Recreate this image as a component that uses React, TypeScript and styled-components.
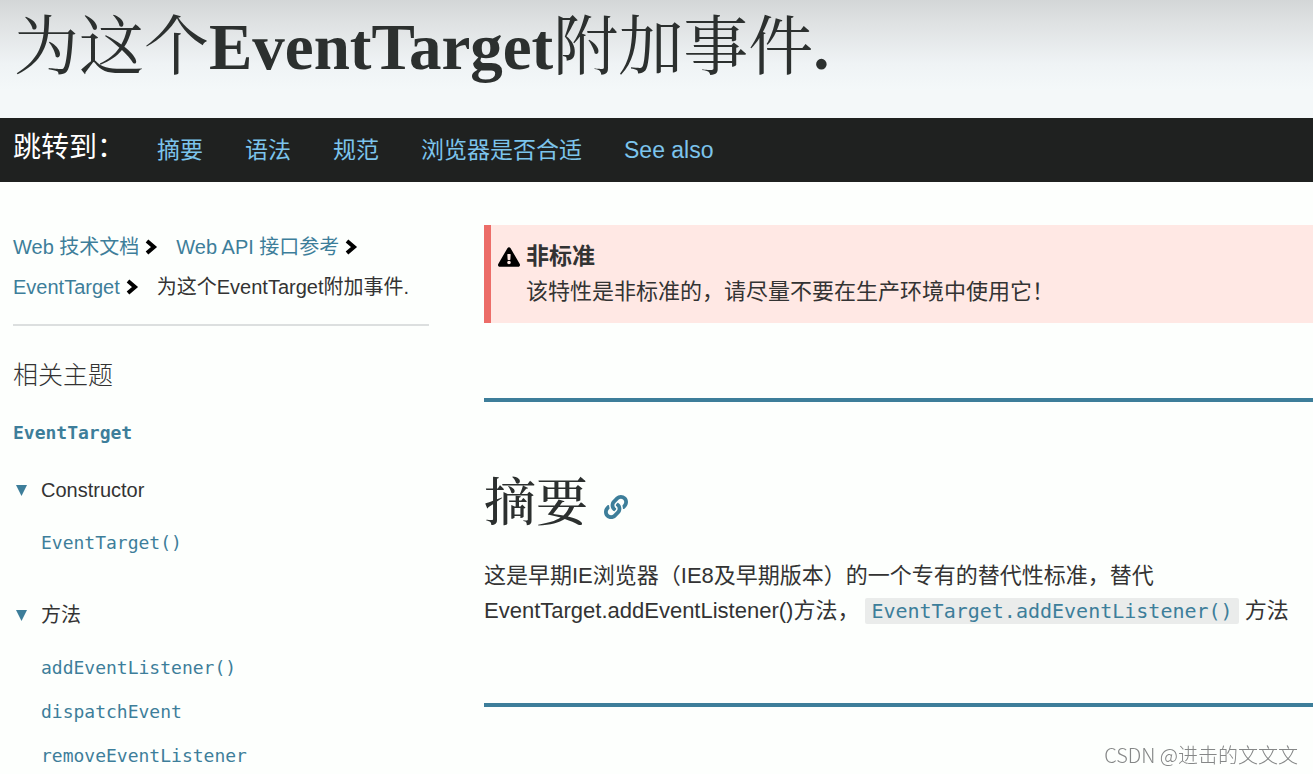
import React from "react";
import styled, { createGlobalStyle } from "styled-components";
import { FaExclamationTriangle, FaLink } from "react-icons/fa";

const sans = `"Liberation Sans", "Noto Sans CJK SC", sans-serif`;
const serif = `"Liberation Serif", "Noto Serif CJK SC", "Noto Sans CJK SC", serif`;
const mono = `"DejaVu Sans Mono", "Noto Sans CJK SC", monospace`;

const GlobalStyle = createGlobalStyle`
  *, *::before, *::after { box-sizing: border-box; }
  body {
    margin: 0;
    background: #fdfffd;
    color: #333;
    font: 20px/40px ${sans};
  }
  a { color: #3d7e9a; text-decoration: none; }
  a:hover { text-decoration: underline; }
  ul, ol { list-style: none; margin: 0; padding: 0; }
`;

const Header = styled.header`
  padding: 7px 14px 31px;
  background: linear-gradient(#d3d6d7 0, #dfe2e3 24px, #eff3f5 64px, #f4f8f9 90px);
`;

const Title = styled.h1`
  margin: 0;
  font: 400 65px/80px ${serif};
  color: #2c302f;
`;

const Latin = styled.span`
  font-weight: 700;
`;

const JumpBar = styled.nav`
  display: flex;
  align-items: center;
  gap: 32px;
  min-height: 64px;
  padding: 0 13px;
  background: #1f2120;
`;

const JumpLabel = styled.span`
  font-size: 28px;
  line-height: 60px;
  padding-bottom: 4px;
  color: #fff;
`;

const JumpList = styled.ul`
  display: flex;
  flex-wrap: wrap;
  gap: 0 42px;
  font-size: 23px;
  a { color: #7cc4ec; }
`;

const Columns = styled.div`
  display: grid;
  grid-template-columns: minmax(0, 416px) minmax(0, 1fr);
  gap: 55px;
  padding-left: 13px;
`;

const Sidebar = styled.aside`
  padding-top: 45px;
`;

const Crumbs = styled.ol`
  display: flex;
  flex-wrap: wrap;
  column-gap: 18px;
  padding-bottom: 17px;
  border-bottom: 2px solid #dcdfdf;
`;

const Crumb = styled.li`
  display: flex;
  align-items: center;
  gap: 6px;
`;

const TopicTitle = styled.h2`
  margin: 29px 0 0;
  font-size: 25px;
  font-weight: 300;
  line-height: 40px;
`;

const TopicLink = styled.a`
  display: block;
  margin-top: 20px;
  font: 700 18px/36px ${mono};
`;

const Group = styled.details`
  margin-top: 18px;
  & + & { margin-top: 29px; }
`;

const GroupTitle = styled.summary`
  display: flex;
  align-items: center;
  gap: 14px;
  padding-left: 3px;
  line-height: 42px;
  cursor: pointer;
`;

const GroupList = styled.ul`
  padding: 10px 0 0 28px;
  font: 18px/44px ${mono};
`;

const Content = styled.main`
  padding-top: 43px;
`;

const Alert = styled.div`
  display: grid;
  grid-template-columns: 22px 1fr;
  column-gap: 6px;
  padding: 14px 7px;
  border-left: 7px solid #ec6d68;
  background: #ffe8e4;
  line-height: 35px;
  svg { align-self: center; color: #000; }
`;

const AlertTitle = styled.strong`
  font-size: 23px;
`;

const AlertText = styled.span`
  grid-column: 2;
  font-size: 22px;
`;

const Section = styled.section`
  margin-top: 75px;
  padding-top: 64px;
  border-top: 4px solid #3d7e9a;
`;

const SectionTitle = styled.h2`
  display: flex;
  align-items: center;
  gap: 16px;
  margin: 0;
  font: 500 52px/76px ${serif};
  color: #2c302f;
  a { display: flex; padding-top: 6px; }
`;

const Paragraph = styled.p`
  margin: 16px 0 0;
  font-size: 22px;
  line-height: 35px;
`;

const Code = styled.code`
  margin-left: 6px;
  padding: 1px 6px;
  border-radius: 2px;
  background: #eaeceb;
  font: 20px/24px ${mono};
`;

const Watermark = styled.div`
  position: fixed;
  right: 15px;
  bottom: 4px;
  font: 300 20px/30px "Noto Sans CJK SC", sans-serif;
  color: #858787;
`;

const Chevron = () => (
  <svg width="13" height="16" viewBox="0 0 13 16" aria-hidden="true">
    <path d="M2 2 9 8 2 14" fill="none" stroke="#000" strokeWidth="4" />
  </svg>
);

const Marker = () => (
  <svg width="11" height="12" viewBox="0 0 11 12" aria-hidden="true">
    <path d="M0 1h11L5.5 12z" fill="#3d7e9a" />
  </svg>
);

const jumps = ["摘要", "语法", "规范", "浏览器是否合适", "See also"];
const crumbs = ["Web 技术文档", "Web API 接口参考", "EventTarget"];
const groups = [
  { title: "Constructor", items: ["EventTarget()"] },
  { title: "方法", items: ["addEventListener()", "dispatchEvent", "removeEventListener"] },
];

export default function App() {
  return (
    <div lang="zh-CN">
      <GlobalStyle />
      <Header>
        <Title>
          为这个<Latin>EventTarget</Latin>附加事件<Latin>.</Latin>
        </Title>
      </Header>
      <JumpBar aria-label="跳转到">
        <JumpLabel>跳转到：</JumpLabel>
        <JumpList>
          {jumps.map((name) => (
            <li key={name}>
              <a href="#summary">{name}</a>
            </li>
          ))}
        </JumpList>
      </JumpBar>
      <Columns>
        <Sidebar>
          <Crumbs>
            {crumbs.map((name) => (
              <Crumb key={name}>
                <a href="#top">{name}</a>
                <Chevron />
              </Crumb>
            ))}
            <Crumb>为这个EventTarget附加事件.</Crumb>
          </Crumbs>
          <TopicTitle>相关主题</TopicTitle>
          <TopicLink href="#top">EventTarget</TopicLink>
          {groups.map((group) => (
            <Group key={group.title} open>
              <GroupTitle>
                <Marker />
                {group.title}
              </GroupTitle>
              <GroupList>
                {group.items.map((item) => (
                  <li key={item}>
                    <a href="#top">{item}</a>
                  </li>
                ))}
              </GroupList>
            </Group>
          ))}
        </Sidebar>
        <Content>
          <Alert>
            <FaExclamationTriangle size={22} aria-hidden="true" />
            <AlertTitle>非标准</AlertTitle>
            <AlertText>该特性是非标准的，请尽量不要在生产环境中使用它！</AlertText>
          </Alert>
          <Section id="summary">
            <SectionTitle>
              摘要
              <a href="#summary" aria-label="摘要">
                <FaLink size={24} />
              </a>
            </SectionTitle>
            <Paragraph>
              这是早期IE浏览器（IE8及早期版本）的一个专有的替代性标准，替代
              <br />
              EventTarget.addEventListener()方法，
              <a href="#top">
                <Code>EventTarget.addEventListener()</Code>
              </a>{" "}
              方法
            </Paragraph>
          </Section>
          <Section />
        </Content>
      </Columns>
      <Watermark>CSDN @进击的文文文</Watermark>
    </div>
  );
}
